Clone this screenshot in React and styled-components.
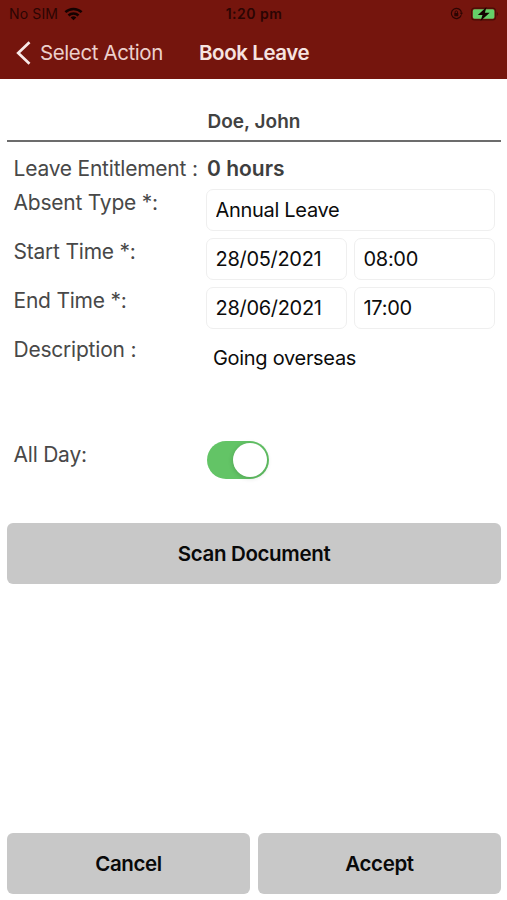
import React, { useState } from 'react';
import styled, { createGlobalStyle } from 'styled-components';

const GlobalStyle = createGlobalStyle`
    * {
        box-sizing: border-box;
    }

    body {
        margin: 0;
        background-color: white;
        font-family: Inter, "Liberation Sans", sans-serif;
    }

    input, button, textarea {
        font-family: inherit;
    }
`;

const Screen = styled.div`
    display: flex;
    flex-direction: column;
    width: 100%;
    height: 100vh;
    overflow: hidden;
`;

const Header = styled.header`
    flex: none;
    height: 79px;
    background-color: #75150d;
`;

const StatusBar = styled.div`
    display: grid;
    grid-template-columns: 1fr auto 1fr;
    align-items: center;
    height: 28px;
    padding: 0 8px 1px 9px;
    color: #2b0503;
    font-size: 14px;
`;

const Carrier = styled.div`
    display: flex;
    align-items: center;
    gap: 6px;
    letter-spacing: 0.15px;
`;

const Clock = styled.div`
    font-weight: 600;
    letter-spacing: 0.5px;
`;

const StatusIcons = styled.div`
    display: flex;
    align-items: center;
    justify-content: flex-end;
    gap: 8px;
`;

const NavBar = styled.nav`
    display: flex;
    align-items: center;
    height: 49px;
    padding-left: 16px;
`;

const BackButton = styled.button`
    display: flex;
    align-items: center;
    gap: 9px;
    width: 183px;
    padding: 0;
    border: none;
    background: none;
    color: #ecd0cc;
    font-size: 20.5px;
    letter-spacing: -0.4px;
    white-space: nowrap;
`;

const Title = styled.h1`
    margin: 0;
    color: #f6e4e1;
    font-size: 20.5px;
    font-weight: 600;
    letter-spacing: -0.42px;
`;

const Content = styled.main`
    display: flex;
    flex-direction: column;
    flex: 1;
    padding: 0 6px 6px 7px;
`;

const Employee = styled.h2`
    height: 63px;
    margin: 0;
    padding-top: 30px;
    border-bottom: 2px solid #6c6c6c;
    color: #424242;
    font-size: 19px;
    font-weight: 600;
    line-height: 26px;
    text-align: center;
`;

const Form = styled.form`
    display: flex;
    flex-direction: column;
    padding: 13px 6px 0;
`;

const Row = styled.div`
    display: grid;
    grid-template-columns: 193px minmax(0, 1fr);
    align-items: start;
    height: ${({ $height }) => $height || 49}px;
`;

const Label = styled.label`
    padding-left: 0.5px;
    color: #484848;
    font-size: 21px;
    line-height: 27px;
    letter-spacing: -0.22px;
    white-space: nowrap;
`;

const Hours = styled.strong`
    padding-left: 1px;
    color: #3e3e3e;
    font-size: 21px;
    font-weight: 600;
    line-height: 27px;
`;

const Fields = styled.div`
    display: flex;
    gap: 7px;
`;

const Input = styled.input`
    flex: 1;
    min-width: 0;
    height: 42px;
    padding: 0 8.5px;
    border: 1px solid #efefef;
    border-radius: 7px;
    outline: none;
    background-color: white;
    color: #0c0c0c;
    font-size: 20px;
    letter-spacing: -0.3px;
`;

const TextArea = styled.textarea`
    height: 90px;
    padding: 9px 7px;
    border: none;
    outline: none;
    resize: none;
    color: #0c0c0c;
    font-size: 20px;
    line-height: 26px;
    letter-spacing: -0.3px;
`;

const Toggle = styled.button`
    display: flex;
    align-items: center;
    justify-content: ${({ $on }) => ($on ? 'flex-end' : 'flex-start')};
    width: 62px;
    height: 38px;
    margin-left: 1px;
    padding: 2px;
    border: none;
    border-radius: 19px;
    background-color: ${({ $on }) => ($on ? '#63c466' : '#e5e5e5')};
`;

const Knob = styled.span`
    width: 34px;
    height: 34px;
    border-radius: 50%;
    background-color: white;
    box-shadow: 0 1px 5px rgba(0, 0, 0, 0.18);
`;

const Button = styled.button`
    flex: ${({ $grow }) => ($grow ? 1 : 'none')};
    height: 61px;
    padding: 0 0 1px;
    border: none;
    border-radius: 6px;
    background-color: #c8c8c8;
    color: #090909;
    font-size: 20.5px;
    font-weight: 600;
    letter-spacing: -0.35px;
`;

const Footer = styled.footer`
    display: flex;
    gap: 8px;
    margin-top: auto;
`;

const WifiIcon = () => (
    <svg width="19" height="14" viewBox="0 0 19 14" fill="none" stroke="#140201" strokeWidth="2.5">
        <path d="M1.4 5.2a11.6 11.6 0 0 1 16.2 0" />
        <path d="M4.5 8.5a7.2 7.2 0 0 1 10 0" />
        <path d="M9.5 13.3 6.7 10.5a4 4 0 0 1 5.6 0z" fill="#140201" stroke="none" />
    </svg>
);

const RotationLockIcon = () => (
    <svg width="13" height="13" viewBox="0 0 13 13" fill="none" stroke="#2b0503">
        <path d="M11.2 8.3a5.1 5.1 0 1 1 .3-2.6" strokeWidth="1.2" />
        <path d="M9.8 5.8h3.2l-1.6 2.2z" fill="#2b0503" stroke="none" />
        <rect x="4.3" y="6" width="4" height="3.2" rx="0.5" fill="#2b0503" stroke="none" />
        <path d="M5.1 6.2V5a1.2 1.2 0 0 1 2.4 0v1.2" strokeWidth="0.9" />
    </svg>
);

const BatteryIcon = () => (
    <svg width="28" height="14" viewBox="0 0 28 14">
        <rect x="0.6" y="1.1" width="24" height="11.8" rx="3" fill="none" stroke="#4a0d07" strokeWidth="1.1" />
        <rect x="1.8" y="2.3" width="21.6" height="9.4" rx="1.6" fill="#65d169" />
        <path d="M25.8 5v4c1.8-.6 1.8-3.4 0-4z" fill="#4a0d07" />
        <path d="M15.5 0 6.8 8h4.7l-2 6 9.2-8.3h-4.8z" fill="#140201" />
    </svg>
);

const BackIcon = () => (
    <svg width="15" height="24" viewBox="0 0 15 24" fill="none" stroke="#f8e9e7" strokeWidth="2.7">
        <path d="M13.5 1.2 2.2 12l11.3 10.8" />
    </svg>
);

export default function App() {
    const [leave, setLeave] = useState({
        type: 'Annual Leave',
        startDate: '28/05/2021',
        startTime: '08:00',
        endDate: '28/06/2021',
        endTime: '17:00',
        description: 'Going overseas',
    });
    const [allDay, setAllDay] = useState(true);

    const onChange = (e) => setLeave({ ...leave, [e.target.name]: e.target.value });

    return (
        <Screen>
            <GlobalStyle />
            <Header>
                <StatusBar>
                    <Carrier>No SIM <WifiIcon /></Carrier>
                    <Clock>1:20 pm</Clock>
                    <StatusIcons>
                        <RotationLockIcon />
                        <BatteryIcon />
                    </StatusIcons>
                </StatusBar>
                <NavBar>
                    <BackButton><BackIcon />Select Action</BackButton>
                    <Title>Book Leave</Title>
                </NavBar>
            </Header>

            <Content>
                <Employee>Doe, John</Employee>
                <Form onSubmit={(e) => e.preventDefault()}>
                    <Row $height={34}>
                        <Label>Leave Entitlement :</Label>
                        <Hours>0 hours</Hours>
                    </Row>
                    <Row>
                        <Label htmlFor="type">Absent Type *:</Label>
                        <Fields>
                            <Input id="type" name="type" value={leave.type} onChange={onChange} />
                        </Fields>
                    </Row>
                    <Row>
                        <Label htmlFor="startDate">Start Time *:</Label>
                        <Fields>
                            <Input id="startDate" name="startDate" value={leave.startDate} onChange={onChange} />
                            <Input name="startTime" value={leave.startTime} onChange={onChange} />
                        </Fields>
                    </Row>
                    <Row>
                        <Label htmlFor="endDate">End Time *:</Label>
                        <Fields>
                            <Input id="endDate" name="endDate" value={leave.endDate} onChange={onChange} />
                            <Input name="endTime" value={leave.endTime} onChange={onChange} />
                        </Fields>
                    </Row>
                    <Row $height={105}>
                        <Label htmlFor="description">Description :</Label>
                        <TextArea id="description" name="description" value={leave.description} onChange={onChange} />
                    </Row>
                    <Row $height={82}>
                        <Label>All Day:</Label>
                        <Toggle type="button" $on={allDay} onClick={() => setAllDay(!allDay)}>
                            <Knob />
                        </Toggle>
                    </Row>
                </Form>
                <Button>Scan Document</Button>
                <Footer>
                    <Button $grow>Cancel</Button>
                    <Button $grow>Accept</Button>
                </Footer>
            </Content>
        </Screen>
    );
}
